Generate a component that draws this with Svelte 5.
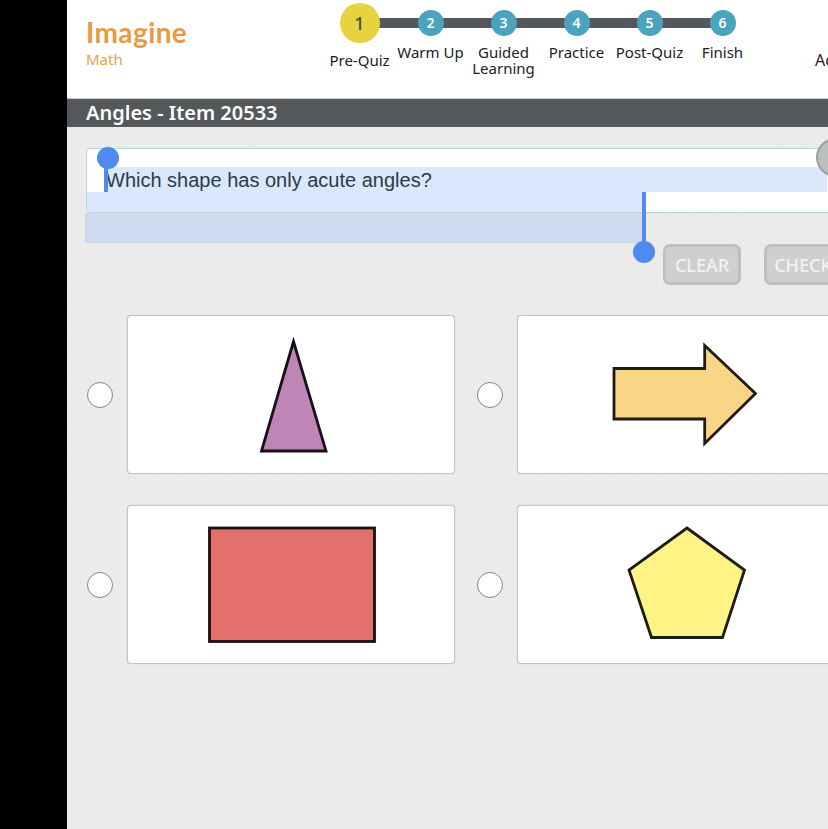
<script>
  const steps = [
    { n: 2, label: 'Warm Up' },
    { n: 3, label: 'Guided Learning' },
    { n: 4, label: 'Practice' },
    { n: 5, label: 'Post-Quiz' },
    { n: 6, label: 'Finish' },
  ];

  const options = [
    { id: 'a', shape: 'triangle' },
    { id: 'b', shape: 'arrow' },
    { id: 'c', shape: 'rect' },
    { id: 'd', shape: 'pentagon' },
  ];
</script>

<div class="page">
  <aside class="rail"></aside>

  <main class="main">
    <header class="header">
      <div class="logo">
        <div class="logo-top">Imagine</div>
        <div class="logo-sub">Math</div>
      </div>

      <ol class="steps">
        <li class="step current">
          <span class="dot">1</span>
          <span class="label">Pre-Quiz</span>
        </li>
        {#each steps as step}
          <li class="step">
            <span class="dot">{step.n}</span>
            <span class="label">{step.label}</span>
          </li>
        {/each}
      </ol>

      <div class="account">Account</div>
    </header>

    <div class="titlebar">Angles - Item 20533</div>

    <section class="content">
      <div class="question">
        <p>Which shape has only acute angles?</p>
        <span class="speaker"></span>

        <!-- text selection overlay -->
        <span class="sel sel-line"></span>
        <span class="sel sel-rest"></span>
        <span class="sel-below"></span>
        <span class="handle handle-start"></span>
        <span class="handle handle-end"></span>
      </div>

      <div class="actions">
        <button class="btn">CLEAR</button>
        <button class="btn">CHECK</button>
      </div>

      <div class="options">
        {#each options as opt}
          <div class="option">
            <span class="radio"></span>
            <div class="card">
              <svg viewBox="0 0 328 158" width="328" height="158">
                {#if opt.shape === 'triangle'}
                  <polygon points="166.5,26.5 134.5,136 199,136" fill="#bd86b6" stroke="#1a0f1c" stroke-width="2.8" />
                {:else if opt.shape === 'arrow'}
                  <polygon points="97,53.5 187.7,53.5 187.7,30.5 238.5,78.5 187.7,128.5 187.7,104 97,104" fill="#f9d587" stroke="#1f1a12" stroke-width="2.8" />
                {:else if opt.shape === 'rect'}
                  <rect x="82.5" y="23" width="165" height="113.5" fill="#e2706b" stroke="#1c0f0f" stroke-width="2.8" />
                {:else}
                  <polygon points="170,23 227.5,65 205.5,132.5 134.5,132.5 112,65" fill="#fff385" stroke="#1c1c14" stroke-width="2.8" />
                {/if}
              </svg>
            </div>
          </div>
        {/each}
      </div>
    </section>
  </main>
</div>

<style>
  :global(body) {
    margin: 0;
    overflow: hidden;
    background: #000;
  }

  .page {
    display: flex;
    height: 829px;
    width: 828px;
    overflow: hidden;
    font-family: "Noto Sans", sans-serif;
  }

  .rail {
    flex: 0 0 67px;
    background: #000;
  }

  .main {
    flex: 0 0 1100px;
    display: flex;
    flex-direction: column;
    background-color: #ebebeb;
    background-image:
      repeating-linear-gradient(90deg, rgba(255, 255, 255, 0.12) 0 1px, transparent 1px 3px),
      repeating-linear-gradient(0deg, rgba(0, 0, 0, 0.008) 0 1px, transparent 1px 3px);
  }

  .header {
    position: relative;
    display: flex;
    height: 98px;
    background: #fff;
    border-bottom: 1px solid #c9cbcb;
  }

  .logo {
    padding: 16px 0 0 19px;
    width: 206px;
    color: #e69a45;
  }

  .logo-top {
    font-family: "Lato", sans-serif;
    font-size: 28px;
    line-height: 32px;
    font-weight: 700;
    letter-spacing: 0.4px;
  }

  .logo-sub {
    font-size: 15px;
    line-height: 20px;
    margin-top: 1px;
    color: #e69f50;
  }

  .steps {
    position: relative;
    display: flex;
    list-style: none;
    margin: 0;
    padding: 0;
    margin-left: 31px;
  }

  .steps::before {
    content: "";
    position: absolute;
    left: 36px;
    right: 36px;
    top: 18px;
    height: 10px;
    background: #54585a;
  }

  .step {
    position: relative;
    width: 73px;
    display: flex;
    flex-direction: column;
    align-items: center;
    padding-top: 10px;
  }

  .dot {
    width: 26px;
    height: 26px;
    border-radius: 50%;
    background: #4ba3c0;
    color: #fff;
    font-size: 14px;
    font-weight: 600;
    line-height: 26px;
    text-align: center;
  }

  .label {
    margin-top: 8px;
    font-size: 15px;
    line-height: 16px;
    color: #222;
    text-align: center;
    width: 73px;
  }

  .current {
    padding-top: 3px;
    margin-right: -2px;
  }

  .current .dot {
    width: 40px;
    height: 40px;
    line-height: 40px;
    background: #e6d33f;
    color: #4a4a32;
    font-size: 18px;
    font-weight: 500;
  }

  .current .label {
    margin-top: 9px;
  }

  .account {
    margin: 50px 0 0 56px;
    font-size: 16px;
    line-height: 20px;
    color: #222;
  }

  .titlebar {
    height: 28px;
    padding-left: 19px;
    background: #54585a;
    color: #fff;
    font-size: 20px;
    font-weight: 600;
    line-height: 27px;
  }

  .content {
    padding: 21px 0 0 19px;
  }

  .question {
    position: relative;
    width: 900px;
    height: 63px;
    background: #fff;
    border: 1px solid #b5d6da;
    border-radius: 4px;
    box-sizing: content-box;
  }

  .question p {
    position: absolute;
    left: 19px;
    top: 19px;
    margin: 0;
    font-family: "Liberation Sans", sans-serif;
    font-size: 20px;
    line-height: 24px;
    color: #2c3a4c;
    z-index: 2;
  }

  .speaker {
    position: absolute;
    left: 729px;
    top: -11px;
    width: 35px;
    height: 35px;
    border: 2px solid #9a9f9f;
    border-radius: 50%;
    background: #bcbfbf;
    z-index: 3;
  }

  .speaker::after {
    content: "";
    position: absolute;
    left: 10px;
    top: 12px;
    width: 2px;
    height: 9px;
    background: #666;
  }

  .sel {
    position: absolute;
    background: #dbe7fb;
  }

  .sel-line {
    left: 19px;
    top: 18px;
    width: 721px;
    height: 25px;
  }

  .sel-rest {
    left: 0;
    top: 43px;
    width: 556px;
    height: 20px;
    border-bottom-left-radius: 3px;
  }

  .sel-below {
    position: absolute;
    left: -2px;
    top: 64px;
    width: 557px;
    height: 30px;
    background: #cedaee;
  }

  .handle {
    position: absolute;
    width: 4px;
    background: #4e8af0;
    z-index: 4;
  }

  .handle::after {
    content: "";
    position: absolute;
    left: -9px;
    width: 22px;
    height: 22px;
    border-radius: 50%;
    background: #4e8af0;
  }

  .handle-start {
    left: 17px;
    top: 8px;
    height: 35px;
  }

  .handle-start::after {
    left: -7px;
    top: -10px;
  }

  .handle-end {
    left: 555px;
    top: 43px;
    height: 61px;
  }

  .handle-end::after {
    bottom: -10px;
  }

  .actions {
    display: flex;
    gap: 23px;
    margin: 31px 0 0 577px;
    position: relative;
  }

  .btn {
    width: 78px;
    height: 41px;
    padding: 0;
    border: 3px solid #bfbfbf;
    border-radius: 7px;
    background: #cfcfcf;
    color: #f2f2f2;
    font-family: "Noto Sans", sans-serif;
    font-size: 18px;
    font-weight: 500;
  }

  .options {
    display: grid;
    grid-template-columns: 368px 368px;
    column-gap: 22px;
    row-gap: 31px;
    margin: 30px 0 0 1px;
  }

  .option {
    display: flex;
    align-items: center;
    gap: 14px;
  }

  .radio {
    flex: none;
    width: 24px;
    height: 24px;
    border: 1px solid #858585;
    border-radius: 50%;
    background: #fff;
  }

  .card {
    width: 326px;
    height: 157px;
    background: #fff;
    border: 1px solid #c4c4c4;
    border-radius: 4px;
    overflow: hidden;
    box-shadow: 0 0 1px rgba(0, 0, 0, 0.25);
  }

  .card svg {
    display: block;
    margin: -1px;
  }
</style>
